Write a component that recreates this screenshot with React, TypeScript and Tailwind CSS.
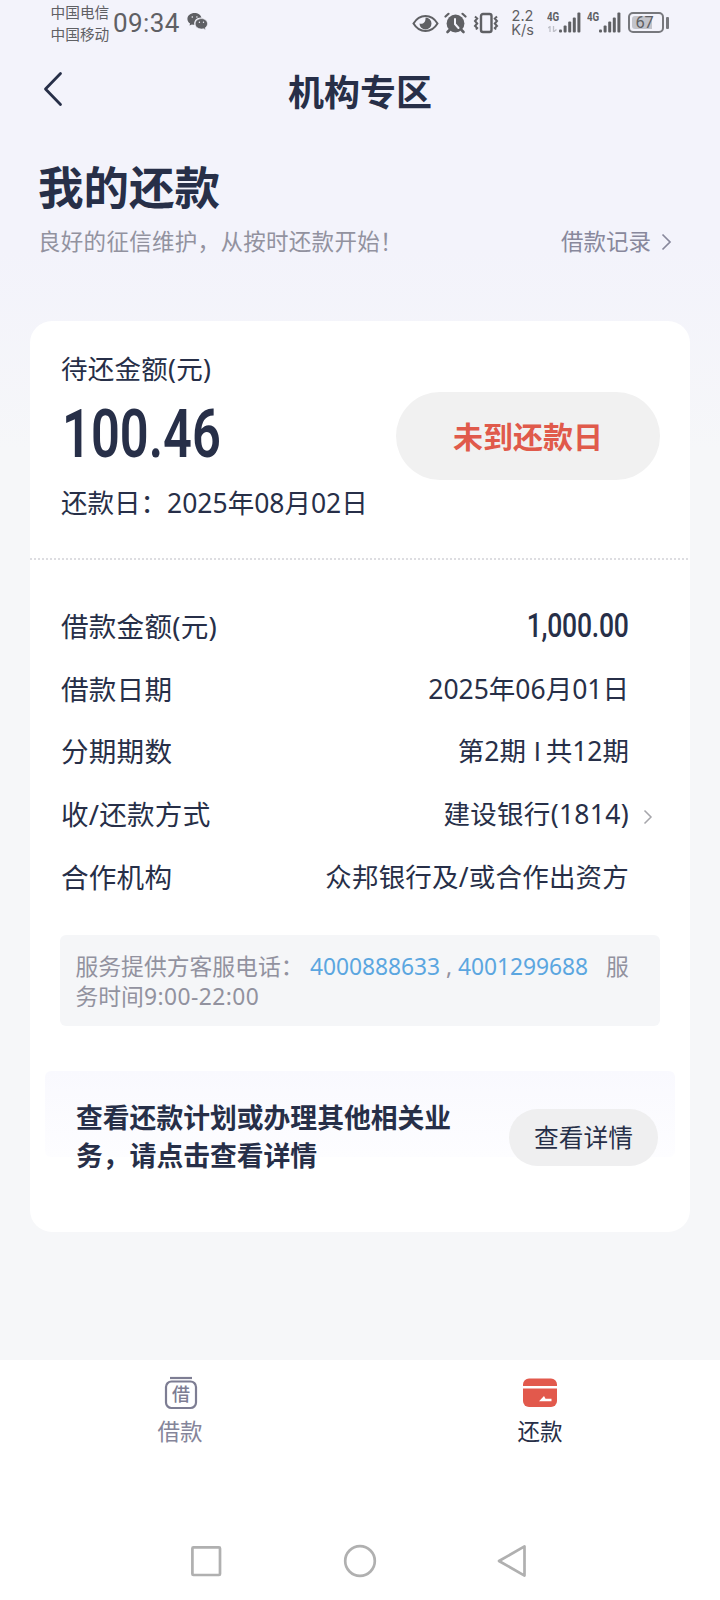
import type { ReactNode } from 'react';

interface DetailRow {
  label: string;
  value: ReactNode;
  arrow?: boolean;
}

const detailRows: DetailRow[] = [
  {
    label: '借款金额(元)',
    value: (
      <span className="inline-block origin-right scale-x-[0.78] font-['Roboto'] text-[34px] font-medium tracking-[-0.3px]">
        1,000.00
      </span>
    ),
  },
  { label: '借款日期', value: '2025年06月01日' },
  {
    label: '分期期数',
    value: (
      <>
        第2期<span className="mr-[5px] ml-[8px] font-['Inter'] text-[25px]">I</span>共12期
      </>
    ),
  },
  {
    label: '收/还款方式',
    value: <span className="tracking-[0.3px]">建设银行(1814)</span>,
    arrow: true,
  },
  {
    label: '合作机构',
    value: <span className="tracking-[0.2px]">众邦银行及/或合作出资方</span>,
  },
];

function SignalIcon({ bars }: { bars: number[] }) {
  return (
    <svg className="block h-[21px] w-[22px]" viewBox="0 0 22 21" fill="#5f6064">
      {bars.map((h, i) => (
        <rect key={i} x={i * 4.6} y={20.5 - h} width="3" height={h} rx="1" />
      ))}
    </svg>
  );
}

function StatusBar() {
  return (
    <div className="flex h-[46px] items-start pl-[50.5px] text-[#5f6064]">
      <div className="mt-[0.5px] w-[62.5px] text-[14.7px] leading-[22px]">
        <p>中国电信</p>
        <p>中国移动</p>
      </div>
      <span className="w-[68px] whitespace-nowrap font-['Roboto'] text-[26px] leading-[47px] tracking-[0.4px]">09:34</span>
      <svg className="mt-[12px] ml-[6px] h-[19px] w-[21px]" viewBox="0 0 21 19" fill="#5f6064">
        <path d="M7.6 1C3.6 1 .4 3.6.4 6.9c0 1.9 1 3.5 2.7 4.6l-.6 2.1 2.4-1.2c.8.2 1.6.4 2.5.4-1-4.2 2.6-7.5 7.1-7.2C13.8 2.9 11 1 7.6 1z" />
        <path d="M14.4 6.6c-3.5 0-6.2 2.3-6.2 5.2s2.7 5.2 6.2 5.2c.7 0 1.4-.1 2.1-.3l2.2 1.2-.6-2c1.5-1 2.4-2.4 2.4-4.1 0-2.9-2.7-5.2-6.1-5.2z" stroke="#f3f3fb" strokeWidth=".6" />
        <g fill="#f3f3fb">
          <circle cx="5.3" cy="5" r=".8" />
          <circle cx="9.9" cy="5" r=".8" />
          <circle cx="12.4" cy="10.3" r=".7" />
          <circle cx="16.5" cy="10.3" r=".7" />
        </g>
      </svg>
      <div className="ml-[203.5px] flex items-start">
        <svg className="mt-[14px] h-[19px] w-[27px]" viewBox="0 0 27 19" fill="none" stroke="#5f6064" strokeWidth="2">
          <path d="M1.5 9.5C4.5 4.5 8.5 2 13.5 2s9 2.5 12 7.5c-3 5-7 7.5-12 7.5s-9-2.5-12-7.5z" />
          <path d="M13.5 3.5a6 6 0 1 1-6 6c2.5 1.2 6.5-.5 6-6z" fill="#5f6064" stroke="none" />
        </svg>
        <svg className="mt-[12px] ml-[5px] h-[22px] w-[23px]" viewBox="0 0 23 22" fill="none" stroke="#5f6064" strokeLinecap="round">
          <circle cx="11.5" cy="11.5" r="8.9" fill="#5f6064" stroke="none" />
          <path d="M1.5 4.5 4.5 1.8M21.5 4.5 18.5 1.8" strokeWidth="2.2" />
          <path d="M5.5 18 3.5 20M17.5 18l2 2" strokeWidth="2.6" />
          <path d="M11 7v5l3.5 4" stroke="#f3f3fb" strokeWidth="2" />
        </svg>
        <svg className="mt-[12px] ml-[6px] h-[22px] w-[26px]" viewBox="0 0 26 22" fill="none" stroke="#5f6064" strokeWidth="2">
          <rect x="8" y="2" width="10.5" height="18" rx="2" strokeWidth="2.4" />
          <path d="M2 4.5 4.2 6.5 2 9l2.2 2.5L2 14l2.2 2L3 17.5M24 4.5l-2.2 2L24 9l-2.2 2.5L24 14l-2.2 2 1.2 1.5" />
        </svg>
        <div className="mt-[9px] ml-[12px] w-[24px] text-center text-[14.5px] leading-[14px] font-['Inter']">
          <p>2.2</p>
          <p>K/s</p>
        </div>
        <div className="mt-[12px] ml-[12px] w-[12px]">
          <p className="origin-left scale-x-[0.78] font-['Roboto'] text-[12.5px] leading-[10px] font-bold">4G</p>
          <svg className="mt-[4px] ml-[1px] block h-[6px] w-[9px]" viewBox="0 0 9 6" fill="none" stroke="#bfc0c8" strokeWidth="1.3">
            <path d="M0 2 2 .5V6M8.5 3.5 5.5 6V0" />
          </svg>
        </div>
        <div className="mt-[12px]">
          <SignalIcon bars={[3, 7, 11, 15, 20]} />
        </div>
        <p className="mt-[12px] ml-[6px] w-[12px] origin-left scale-x-[0.78] font-['Roboto'] text-[12.5px] leading-[10px] font-bold">4G</p>
        <div className="mt-[12px]">
          <SignalIcon bars={[3, 7, 11, 15, 20]} />
        </div>
        <div className="mt-[12px] ml-[7px] flex h-[21px] items-center gap-[2px]">
          <div className="flex h-[21px] w-[36px] rounded-[5px] border-2 border-[#77787d] p-[2px]">
            <div className="h-full w-[20px] rounded-l-[3px] bg-[#c3c4cb] pl-[4px] font-['Roboto'] text-[16.5px] leading-[14px] tracking-[-0.2px]">67</div>
          </div>
          <div className="h-[12px] w-[3px] rounded-[1px] bg-[#77787d]" />
        </div>
      </div>
    </div>
  );
}

function RepaymentCard() {
  return (
    <div className="mx-[30px] h-[911px] rounded-[22px] bg-white">
      <div className="flex h-[237px] justify-between pt-[30px] pr-[30px] pl-[31px]">
        <div>
          <p className="text-[26.5px] leading-[36px] tracking-[0.25px]">待还金额(元)</p>
          <p className="mt-[10px] ml-[1px] h-[74px] w-[160px] origin-left scale-x-[0.755] font-['Roboto'] text-[67px] leading-[75px] font-semibold">100.46</p>
          <p className="mt-[14px] text-[26.5px] leading-[36px] whitespace-nowrap">还款日：2025年08月02日</p>
        </div>
        <button className="mt-[41px] h-[88px] w-[264px] rounded-full bg-[#f1f1f1] text-[30px] font-bold text-[#e05a4b]">未到还款日</button>
      </div>
      <div className="h-[2px] bg-[repeating-linear-gradient(90deg,#dddde1_0_2px,transparent_2px_4px)]" />

      <div className="mt-[35px] pl-[31px]">
        {detailRows.map((row) => (
          <div key={row.label} className="flex h-[62.7px] items-center whitespace-nowrap">
            <span className="-mt-[1px] text-[27.6px] leading-[36px] tracking-[0.2px]">{row.label}</span>
            <span className="ml-auto text-[26.5px] leading-[36px]">{row.value}</span>
            <span className="flex w-[61px] pt-[5px] pl-[14px]">
              {row.arrow && (
                <svg className="h-[16px] w-[10px]" viewBox="0 0 10 16" fill="none" stroke="#a6a6ab" strokeWidth="1.5">
                  <path d="m1.5 1.5 6.5 6.5-6.5 6.5" />
                </svg>
              )}
            </span>
          </div>
        ))}
      </div>

      <div className="mx-[30px] mt-[27px] h-[91px] rounded-[6px] bg-[#f5f6f8] pt-[17px] pl-[15.5px] text-[22.8px] leading-[30px] whitespace-nowrap text-[#92929f]">
        <p>
          服务提供方客服电话：
          <span className="ml-[6.5px] tracking-[-0.05px] text-[#5ba6e0]">4000888633</span>
          <span className="mx-[6px]">,</span>
          <span className="tracking-[-0.05px] text-[#5ba6e0]">4001299688</span>
          <span className="ml-[18px]">服</span>
        </p>
        <p>
          务时间<span className="tracking-[0.45px]">9:00-22:00</span>
        </p>
      </div>

      <div className="mx-[15px] mt-[45px] flex h-[86px] rounded-[6px] bg-linear-to-b from-[#f9f9fe] to-[#fdfdff] pr-[17px] pl-[31px]">
        <p className="mt-[28px] w-[384px] text-[26.8px] leading-[37.5px] font-bold">查看还款计划或办理其他相关业务，请点击查看详情</p>
        <button className="mt-[38px] ml-auto h-[57px] w-[149px] rounded-full bg-[#efeff0] text-[24.7px]">查看详情</button>
      </div>
    </div>
  );
}

function TabBar() {
  return (
    <div className="flex h-[140px] bg-white text-[22.5px] leading-[30px]">
      <div className="flex flex-1 flex-col items-center pt-[16px] text-[#85859a]">
        <svg className="ml-[2px] h-[34px] w-[34px]" viewBox="0 0 34 34" fill="none" stroke="#7d7d93" strokeWidth="2.2">
          <path d="M6 2h22" />
          <rect x="2" y="5.5" width="30" height="26.5" rx="5.5" />
          <text x="17" y="25" textAnchor="middle" fontSize="18" fontWeight="500" fill="#7d7d93" stroke="none">借</text>
        </svg>
        <span className="mt-[7px]">借款</span>
      </div>
      <div className="flex flex-1 flex-col items-center pt-[16px] text-[#272f48]">
        <svg className="h-[34px] w-[34px]" viewBox="0 0 34 34">
          <path d="M6 2.5h22a6 6 0 0 1 6 6V10H0V8.500a6 6 0 0 1 6-6z" fill="#e2594c" />
          <path d="M0 12.500h34V25a6 6 0 0 1-6 6H6a6 6 0 0 1-6-6z" fill="#e2594c" />
          <path d="M16 25.2 21 20l1.500 2.800h6v2.400z" fill="#fff" />
        </svg>
        <span className="mt-[7px]">还款</span>
      </div>
    </div>
  );
}

export default function App() {
  return (
    <div className="flex h-[1600px] w-[720px] flex-col overflow-hidden bg-[#f6f7f9] bg-[linear-gradient(#f3f3fb_0,#f3f3fb_250px,#f6f7f9_450px)] font-['Noto_Sans','Noto_Sans_CJK_SC',sans-serif] text-[#272f48]">
      <StatusBar />
      <header className="flex h-[92px] items-start">
        <svg className="mt-[25px] ml-[43px] h-[36px] w-[20px]" viewBox="0 0 20 36" fill="none" stroke="#272f48" strokeWidth="2.8" strokeLinecap="round" strokeLinejoin="round">
          <path d="M17.5 2.5 2.5 18l15 15.5" />
        </svg>
        <h1 className="mt-[22px] mr-[63px] flex-1 text-center text-[36px] leading-[50px] font-bold">机构专区</h1>
      </header>

      <section className="h-[183px] pl-[38px]">
        <h2 className="mt-[19px] text-[45.5px] leading-[60px] font-bold">我的还款</h2>
        <div className="mt-[8px] flex items-center pr-[48px] text-[22.5px] leading-[34px] text-[#92929f]">
          <span className="tracking-[0.3px]">良好的征信维护，从按时还款开始！</span>
          <span className="mr-[10px] ml-auto text-[#88889c]">借款记录</span>
          <svg className="h-[18px] w-[11px]" viewBox="0 0 11 18" fill="none" stroke="#88889c" strokeWidth="1.7">
            <path d="m1.5 1.5 7.5 7.5-7.5 7.5" />
          </svg>
        </div>
      </section>

      <RepaymentCard />

      <div className="mt-auto">
        <TabBar />
        <div className="flex h-[100px] items-start bg-white pt-[44px]">
          <svg className="ml-[190px] h-[34px] w-[337px]" viewBox="0 0 337 34" fill="none" stroke="#b0b0b0" strokeWidth="2.7" strokeLinejoin="round">
            <rect x="2.4" y="3.4" width="27.6" height="27.6" rx="1" />
            <circle cx="170" cy="17" r="14.8" />
            <path d="M309 17 334.5 2.4v29.2z" />
          </svg>
        </div>
      </div>
    </div>
  );
}
